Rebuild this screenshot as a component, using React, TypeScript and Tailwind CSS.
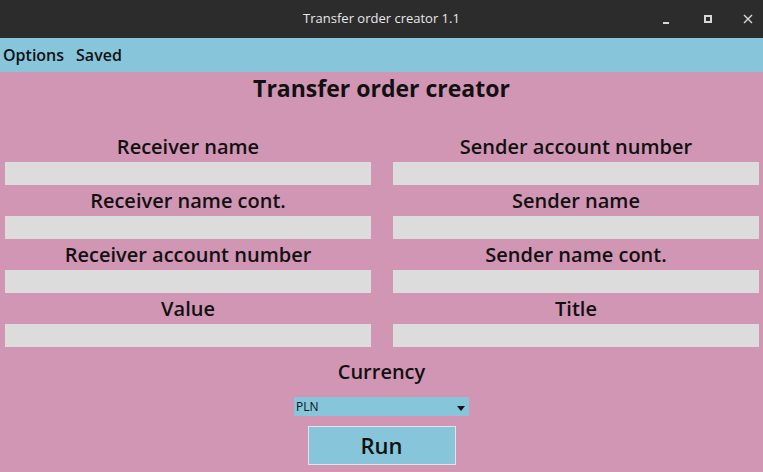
import { useState } from 'react'

const leftFields = ['Receiver name', 'Receiver name cont.', 'Receiver account number', 'Value']
const rightFields = ['Sender account number', 'Sender name', 'Sender name cont.', 'Title']

function Field({ label }: { label: string }) {
  return (
    <div className="flex flex-col">
      <label className="flex h-[31px] items-center justify-center text-[20px] font-semibold leading-none text-[#111]">{label}</label>
      <input className="h-[23px] w-full bg-[#dcdcdc] px-1 text-[14px] outline-none" />
    </div>
  )
}

export default function App() {
  const [currency] = useState('PLN')

  return (
    <div
      className="flex h-[472px] w-[763px] flex-col overflow-hidden bg-[#d296b5]"
      style={{ fontFamily: '"Open Sans", "DejaVu Sans", sans-serif' }}
    >
      <header className="relative flex h-[38px] shrink-0 items-center justify-center bg-[#2c2c2c]">
        <span className="text-[13px] text-[#e8e8e8]">Transfer order creator 1.1</span>
        <div className="absolute right-0 top-0 flex h-full items-center text-[#d8d8d8]">
          <span className="flex w-[34px] justify-center">
            <svg width="10" height="10" viewBox="0 0 10 10"><rect x="2" y="8" width="6" height="2" fill="currentColor" /></svg>
          </span>
          <span className="flex w-[50px] justify-center">
            <svg width="10" height="10" viewBox="0 0 10 10"><rect x="2" y="2" width="6" height="6" fill="none" stroke="currentColor" strokeWidth="2" /></svg>
          </span>
          <span className="flex w-[30px] justify-center">
            <svg width="10" height="10" viewBox="0 0 10 10"><path d="M1 1 L9 9 M9 1 L1 9" stroke="currentColor" strokeWidth="1.4" /></svg>
          </span>
        </div>
      </header>

      <nav className="flex h-[34px] shrink-0 items-center gap-[12px] bg-[#86c5da] px-[3px] text-[16px] font-semibold text-[#111]">
        <span>Options</span>
        <span>Saved</span>
      </nav>

      <main className="flex flex-col">
        <h1 className="flex h-[32px] items-center justify-center text-[23px] font-bold text-[#111]">Transfer order creator</h1>
        <div className="mt-[27px] grid grid-cols-2 gap-x-[22px] pl-[5px] pr-[4px]">
          <div className="flex flex-col">
            {leftFields.map((f) => (
              <Field key={f} label={f} />
            ))}
          </div>
          <div className="flex flex-col">
            {rightFields.map((f) => (
              <Field key={f} label={f} />
            ))}
          </div>
        </div>

        <div className="mt-[10px] flex flex-col items-center">
          <span className="flex h-[30px] items-center text-[20px] font-semibold text-[#111]">Currency</span>
          <div className="mt-[10px] flex h-[19px] w-[175px] items-center justify-between bg-[#86c5da] pl-[2px] pr-[4px] text-[12px] text-[#111]">
            <span>{currency}</span>
            <svg width="8" height="5" viewBox="0 0 8 5" className="mt-[4px]"><path d="M0 0 H8 L4 5 Z" fill="#111" /></svg>
          </div>
          <button
            type="button"
            className="mt-[10px] flex h-[39px] w-[148px] items-center justify-center border border-[#e4e4e4] bg-[#86c5da] text-[22px] font-semibold text-[#111]"
          >
            Run
          </button>
        </div>
      </main>
    </div>
  )
}
